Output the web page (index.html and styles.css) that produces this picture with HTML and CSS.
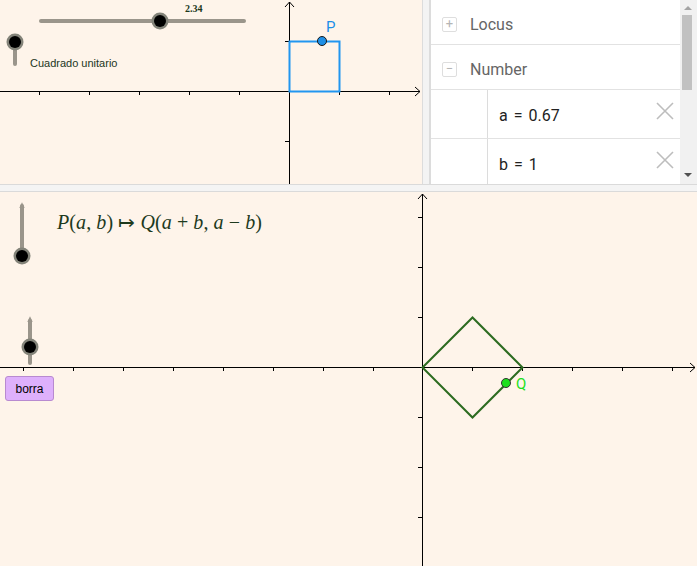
FILE: index.html
```html
<!DOCTYPE html>
<html lang="es">

<head>
    <meta charset="UTF-8">
    <title>Aplicación P → Q</title>
    <link rel="stylesheet" href="styles.css">
</head>

<body>
    <div class="applet">

        <!-- vista gráfica 1 -->
        <div class="graphics top-view">
            <svg width="422" height="184" viewBox="0 0 422 184">
                <g class="axis">
                    <line x1="0" y1="91.5" x2="420" y2="91.5" />
                    <polyline points="415,87 420,91.5 415,96" />
                    <line x1="289.5" y1="184" x2="289.5" y2="2" />
                    <polyline points="285,7 289.5,2 294,7" />
                    <path d="M39.5 91v4M89.5 91v4M139.5 91v4M189.5 91v4M239.5 91v4M339.5 91v4M389.5 91v4M285 41.5h4M285 141.5h4" />
                </g>
                <rect class="unit-square" x="289.5" y="41.5" width="50" height="50" />
                <circle class="pt-p" cx="322" cy="41" r="4.5" />
                <text class="lbl-p" x="326" y="32">P</text>

                <line class="track" x1="41" y1="21" x2="244" y2="21" />
                <circle class="knob-ring" cx="160" cy="21" r="8.5" />
                <circle class="knob" cx="160" cy="21" r="6" />
                <text class="slider-val" x="185" y="12">2.34</text>

                <line class="track" x1="15" y1="42" x2="15" y2="64" />
                <circle class="knob-ring" cx="15" cy="42" r="8.5" />
                <circle class="knob" cx="15" cy="42" r="6" />
                <text class="chk-label" x="30" y="67">Cuadrado unitario</text>
            </svg>
        </div>

        <div class="split-v"></div>

        <!-- vista algebraica -->
        <div class="algebra">
            <div class="alg-list">
                <div class="group">
                    <span class="toggle">+</span>
                    <span class="group-name">Locus</span>
                </div>
                <div class="group">
                    <span class="toggle">&minus;</span>
                    <span class="group-name">Number</span>
                </div>
                <div class="item">
                    <div class="marble"></div>
                    <div class="item-text">a = 0.67</div>
                    <svg class="del" width="18" height="18" viewBox="0 0 18 18">
                        <path d="M1 1L17 17M17 1L1 17" />
                    </svg>
                </div>
                <div class="item">
                    <div class="marble"></div>
                    <div class="item-text">b = 1</div>
                    <svg class="del" width="18" height="18" viewBox="0 0 18 18">
                        <path d="M1 1L17 17M17 1L1 17" />
                    </svg>
                </div>
            </div>
            <div class="scrollbar">
                <span class="arrow-up"></span>
                <span class="thumb"></span>
                <span class="arrow-down"></span>
            </div>
        </div>

        <div class="split-h"></div>

        <!-- vista gráfica 2 -->
        <div class="graphics bottom-view">
            <svg width="697" height="374" viewBox="0 0 697 374">
                <g class="axis">
                    <line x1="0" y1="175.5" x2="695" y2="175.5" />
                    <polyline points="690,171 695,175.5 690,180" />
                    <line x1="422.5" y1="374" x2="422.5" y2="2" />
                    <polyline points="418,7 422.5,2 427,7" />
                    <path d="M23.5 175v4M73.5 175v4M123.5 175v4M173.5 175v4M223.5 175v4M273.5 175v4M323.5 175v4M373.5 175v4M472.5 175v4M522.5 175v4M572.5 175v4M622.5 175v4M672.5 175v4" />
                    <path d="M418 25.5h4M418 75.5h4M418 125.5h4M418 225.5h4M418 275.5h4M418 325.5h4" />
                </g>
                <polygon class="square-q" points="422.5,175.5 472.5,125.5 522.5,175.5 472.5,225.5" />
                <circle class="pt-q" cx="506" cy="191" r="4.5" />
                <text class="lbl-q" x="516" y="197">Q</text>

                <text class="formula" x="57" y="37" textLength="205"><tspan class="it">P</tspan>(<tspan class="it">a</tspan>, <tspan class="it">b</tspan>) ↦ <tspan class="it">Q</tspan>(<tspan class="it">a</tspan> + <tspan class="it">b</tspan>, <tspan class="it">a</tspan> − <tspan class="it">b</tspan>)</text>

                <line class="track" x1="22" y1="14" x2="22" y2="64" />
                <polyline class="tip" points="20,16 22,12 24,16" />
                <circle class="knob-ring" cx="22" cy="64" r="8.5" />
                <circle class="knob" cx="22" cy="64" r="6" />

                <line class="track" x1="30" y1="129" x2="30" y2="171" />
                <polyline class="tip" points="28,130 30,126 32,130" />
                <circle class="knob-ring" cx="30" cy="155" r="8.5" />
                <circle class="knob" cx="30" cy="155" r="6" />
            </svg>
            <button class="btn-borra">borra</button>
        </div>
    </div>
</body>

</html>
```

FILE: styles.css
```css
* {
    margin: 0;
    padding: 0;
    box-sizing: border-box;
}

body {
    width: 697px;
    height: 566px;
    overflow: hidden;
    background: #fff;
    font-family: Roboto, "Liberation Sans", sans-serif;
}

.applet {
    display: grid;
    grid-template-columns: 422px 8px 267px;
    grid-template-rows: 184px 8px 374px;
    width: 697px;
    height: 566px;
}

.graphics {
    background: #fef4ea;
    overflow: hidden;
}

.graphics svg {
    display: block;
}

.bottom-view {
    grid-column: 1 / 4;
    position: relative;
}

.split-v {
    background: #f3f3f3;
    border-left: 1px solid #dcdcdc;
    border-right: 1px solid #dcdcdc;
}

.split-h {
    grid-column: 1 / 4;
    background: #f4f4f4;
    border-top: 1px solid #dadada;
    border-bottom: 1px solid #dadada;
}

/* ejes */
.axis line,
.axis path,
.axis polyline {
    stroke: #000;
    stroke-width: 1;
    fill: none;
}

.unit-square {
    fill: none;
    stroke: #2196f0;
    stroke-width: 2;
}

.pt-p {
    fill: #1e8fe6;
    stroke: #1a1a1a;
    stroke-width: 1;
}

.lbl-p {
    font: 15px Roboto, "Liberation Sans", sans-serif;
    fill: #1b8fe8;
}

.square-q {
    fill: none;
    stroke: #2c6b20;
    stroke-width: 2;
}

.pt-q {
    fill: #1ee01e;
    stroke: #333;
    stroke-width: 1;
}

.lbl-q {
    font: 15px Roboto, "Liberation Sans", sans-serif;
    fill: #1de01d;
}

/* deslizadores */
.track {
    stroke: #9a958b;
    stroke-width: 4;
    stroke-linecap: round;
}

.tip {
    fill: none;
    stroke: #9a958b;
    stroke-width: 1.5;
}

.knob-ring {
    fill: #838379;
}

.knob {
    fill: #000;
}

.slider-val {
    font: bold 10px "Liberation Serif", serif;
    fill: #1c381c;
}

.chk-label {
    font: 11px "Liberation Sans", sans-serif;
    fill: #1c361c;
}

.formula {
    font: 20px "Liberation Serif", serif;
    fill: #1d3a1d;
}

.formula .it {
    font-style: italic;
}

.btn-borra {
    position: absolute;
    left: 5px;
    top: 184px;
    width: 49px;
    height: 25px;
    background: #deb0fc;
    border: 1px solid #b88ad0;
    border-radius: 3px;
    font: 12px "Liberation Sans", sans-serif;
    color: #000;
}

/* vista algebraica */
.algebra {
    display: flex;
    background: #fff;
    overflow: hidden;
}

.alg-list {
    flex: 1;
    border-left: 1px solid #dcdcdc;
}

.group {
    display: flex;
    align-items: center;
    height: 45px;
    border-bottom: 1px solid #e2e2e2;
    padding-left: 11px;
    padding-top: 5px;
}

.toggle {
    width: 15px;
    height: 15px;
    border: 1px solid #dedede;
    border-radius: 2px;
    color: #b5b5b5;
    font-size: 13px;
    line-height: 12px;
    text-align: center;
}

.group-name {
    margin-left: 13px;
    font-size: 16px;
    color: #666;
}

.item {
    display: flex;
    align-items: center;
    height: 49px;
    border-bottom: 1px solid #e2e2e2;
}

.marble {
    width: 57px;
    align-self: stretch;
    border-right: 1px solid #dcdcdc;
}

.item-text {
    flex: 1;
    padding-left: 11px;
    padding-top: 2px;
    font-size: 16px;
    color: #222;
    word-spacing: 2px;
}

.del {
    margin-right: 6px;
    margin-top: -6px;
}

.del path {
    stroke: #bdbdbd;
    stroke-width: 1.6;
    fill: none;
}

.scrollbar {
    width: 17px;
    background: #f1f1f1;
    position: relative;
}

.thumb {
    position: absolute;
    left: 2px;
    top: 15px;
    width: 10px;
    height: 75px;
    background: #c1c1c1;
}

.arrow-up {
    position: absolute;
    left: 4px;
    top: 6px;
    border: 4px solid transparent;
    border-top: 0;
    border-bottom: 4px solid #a3a3a3;
}

.arrow-down {
    position: absolute;
    left: 4px;
    top: 173px;
    border: 4px solid transparent;
    border-bottom: 0;
    border-top: 4px solid #505050;
}
```
